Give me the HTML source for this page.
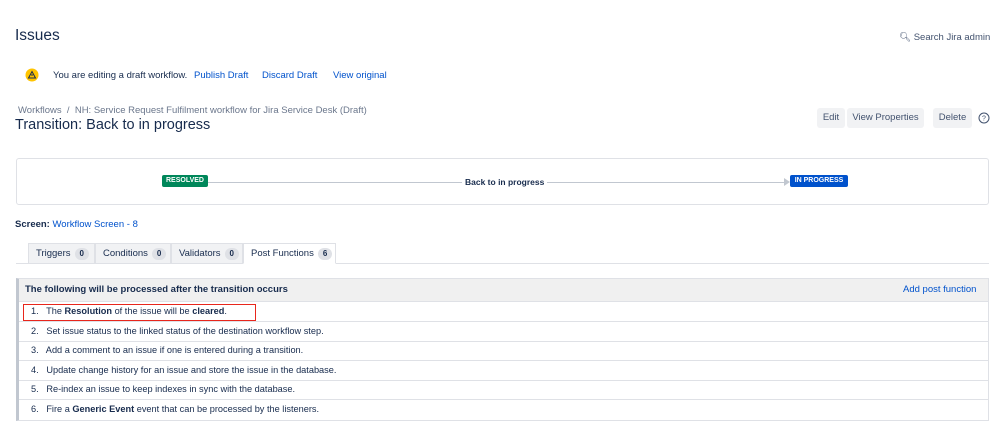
<!DOCTYPE html>
<html><head><style>
*{margin:0;padding:0;box-sizing:border-box}
body{width:998px;height:442px;background:#fff;font-family:"Liberation Sans",sans-serif;color:#172b4d;position:relative;overflow:hidden;font-size:9px}
.a{position:absolute;white-space:nowrap}
a{color:#0052cc;text-decoration:none}
.btn{position:absolute;top:108px;height:20px;background:#f1f2f4;border-radius:3px;color:#42526e;font-size:9.5px;line-height:20px;text-align:center}
.tab{position:absolute;top:243px;height:21px;background:#f1f2f4;border:1px solid #dfe1e6;font-size:9.5px;line-height:19px;padding-left:7px;color:#172b4d}
.cnt{display:inline-block;background:#dfe1e6;border-radius:8px;padding:0 5px;font-size:8px;font-weight:bold;line-height:12px;margin-left:4px}
.row{position:absolute;left:19px;width:970px;height:20px;border-bottom:1px solid #dfe1e6;font-size:9.2px;line-height:19px;padding-left:12px}
</style></head><body>
<div class="a" style="left:15px;top:27px;font-size:15.5px;font-weight:500">Issues</div>
<div class="a" style="left:899px;top:32px;font-size:9.5px;color:#42526e">&#x1F50D;&#xFE0E; Search Jira admin</div>
<svg class="a" style="left:25px;top:68px" width="14" height="14"><circle cx="7" cy="7" r="6.5" fill="#ffc400"/><path d="M7 3.5L10.5 10H3.5Z" fill="none" stroke="#172b4d" stroke-width="1"/><path d="M7 6v2" stroke="#172b4d"/></svg>
<div class="a" style="left:53px;top:70px;font-size:9.5px;color:#172b4d">You are editing a draft workflow.</div>
<a class="a" style="left:194px;top:70px;font-size:9.5px">Publish Draft</a>
<a class="a" style="left:262px;top:70px;font-size:9.5px">Discard Draft</a>
<a class="a" style="left:333px;top:70px;font-size:9.5px">View original</a>
<div class="a" style="left:18px;top:105px;font-size:9.5px;color:#6b778c">Workflows &nbsp;/ &nbsp;NH: Service Request Fulfilment workflow for Jira Service Desk (Draft)</div>
<div class="a" style="left:15px;top:117px;font-size:14.5px">Transition: Back to in progress</div>
<div class="btn" style="left:817px;width:28px">Edit</div>
<div class="btn" style="left:847px;width:77px">View Properties</div>
<div class="btn" style="left:933px;width:39px">Delete</div>
<svg class="a" style="left:978px;top:112px" width="12" height="12"><circle cx="6" cy="6" r="5" fill="none" stroke="#42526e"/><text x="6" y="8.5" font-size="7" text-anchor="middle" fill="#42526e" font-family="Liberation Sans">?</text></svg>
<div class="a" style="left:16px;top:158px;width:973px;height:47px;border:1px solid #dfe1e6;border-radius:3px"></div>
<div class="a" style="left:208px;top:182px;width:577px;height:1px;background:#c1c7d0"></div>
<div class="a" style="left:784px;top:178px;width:0;height:0;border-left:6px solid #c1c7d0;border-top:4px solid transparent;border-bottom:4px solid transparent"></div>
<div class="a" style="left:162px;top:175px;width:46px;height:12px;background:#00875a;border-radius:2px;color:#fff;font-size:7px;font-weight:bold;text-align:center;line-height:12px">RESOLVED</div>
<div class="a" style="left:790px;top:175px;width:58px;height:12px;background:#0052cc;border-radius:2px;color:#fff;font-size:7px;font-weight:bold;text-align:center;line-height:12px">IN PROGRESS</div>
<div class="a" style="left:462px;top:177px;font-size:8.5px;font-weight:bold;background:#fff;padding:0 3px">Back to in progress</div>
<div class="a" style="left:15px;top:219px;font-size:9.5px"><b>Screen:</b> <a>Workflow Screen - 8</a></div>
<div class="a" style="left:16px;top:263px;width:973px;height:1px;background:#dfe1e6"></div>
<div class="tab" style="left:28px;width:67px">Triggers<span class="cnt">0</span></div>
<div class="tab" style="left:95px;width:76px">Conditions<span class="cnt">0</span></div>
<div class="tab" style="left:171px;width:72px">Validators<span class="cnt">0</span></div>
<div class="tab" style="left:243px;width:93px;background:#fff;border-bottom-color:#fff">Post Functions<span class="cnt">6</span></div>
<div class="a" style="left:16px;top:278px;width:973px;height:143px;border:1px solid #dfe1e6;border-left:3px solid #c1c7d0"></div>
<div class="a" style="left:19px;top:279px;width:969px;height:23px;background:#f0f0f0;border-bottom:1px solid #dfe1e6"></div>
<div class="a" style="left:25px;top:284px;font-size:9.5px;font-weight:bold">The following will be processed after the transition occurs</div>
<a class="a" style="left:903px;top:284px;font-size:9.5px">Add post function</a>
<div class="row" style="top:302px">1.&nbsp;&nbsp; The <b>Resolution</b> of the issue will be <b>cleared</b>.</div>
<div class="row" style="top:322px">2.&nbsp;&nbsp; Set issue status to the linked status of the destination workflow step.</div>
<div class="row" style="top:341px">3.&nbsp;&nbsp; Add a comment to an issue if one is entered during a transition.</div>
<div class="row" style="top:361px">4.&nbsp;&nbsp; Update change history for an issue and store the issue in the database.</div>
<div class="row" style="top:380px">5.&nbsp;&nbsp; Re-index an issue to keep indexes in sync with the database.</div>
<div class="row" style="top:400px;border-bottom:none">6.&nbsp;&nbsp; Fire a <b>Generic Event</b> event that can be processed by the listeners.</div>
<div class="a" style="left:23px;top:304px;width:233px;height:17px;border:1.5px solid #e8261c"></div>
</body></html>
